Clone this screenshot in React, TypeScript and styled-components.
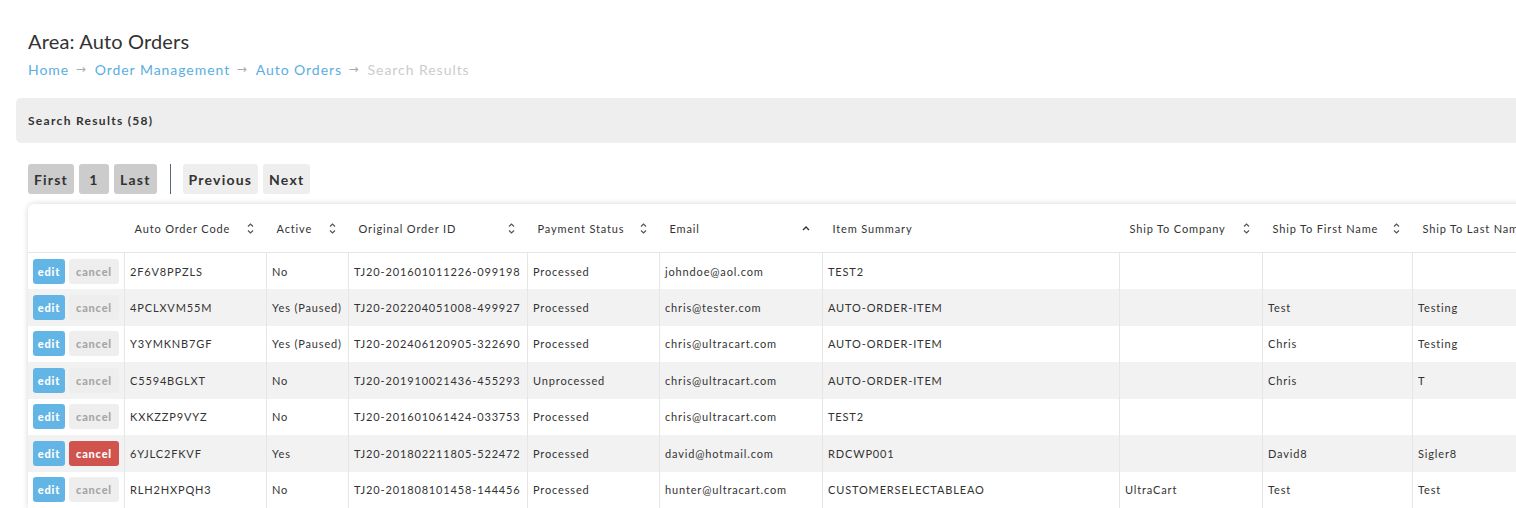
import React from "react";
import styled, { createGlobalStyle } from "styled-components";

const GlobalStyle = createGlobalStyle`
  html, body { margin: 0; padding: 0; background: #ffffff; overflow: hidden; }
  body { font-family: Lato, "Open Sans", Arial, sans-serif; color: #333333; }
`;

const Page = styled.div`
  width: 1760px;
  padding: 0 0 0 16px;
  box-sizing: border-box;
`;

const Header = styled.div`
  padding: 29px 0 0 12px;
`;

const Title = styled.h1`
  margin: 0;
  font-size: 20px;
  line-height: 24px;
  font-weight: 400;
  letter-spacing: 0.15px;
  color: #333333;
`;

const Crumbs = styled.nav`
  display: flex;
  align-items: center;
  margin-top: 6px;
  height: 20px;
  font-size: 14px;
  letter-spacing: 0.95px;
`;

const Crumb = styled.span<{ $current?: boolean }>`
  color: ${(p) => (p.$current ? "#cccccc" : "#5aaee2")};
`;

const Arrow = styled.span`
  color: #aaaaaa;
  font-size: 12px;
  letter-spacing: 0;
  margin: 0 9px 0 6.5px;
  font-family: "DejaVu Sans", sans-serif;
`;

const Panel = styled.div`
  margin-top: 19px;
  height: 45px;
  background: #eeeeee;
  border-radius: 5px;
  display: flex;
  align-items: center;
  padding: 0 12px;
  font-size: 12px;
  font-weight: 700;
  letter-spacing: 1.3px;
  color: #333333;
`;

const Pager = styled.div`
  display: flex;
  align-items: center;
  margin: 21px 0 0 12px;
  height: 30px;
  gap: 5px;
`;

const PageButton = styled.button<{ $dark?: boolean }>`
  height: 30px;
  min-width: 30px;
  padding: 0 6px;
  border: none;
  border-radius: 3px;
  background: ${(p) => (p.$dark ? "#cccccc" : "#eeeeee")};
  color: #333333;
  font-family: Lato, sans-serif;
  font-size: 14px;
  font-weight: 700;
  letter-spacing: 1.2px;
  cursor: pointer;
`;

const Divider = styled.span`
  width: 1px;
  height: 30px;
  background: #5b6877;
  margin: 0 7px 0 8px;
`;

const Card = styled.div`
  margin: 10px 0 0 12px;
  background: #ffffff;
  border-radius: 6px 0 0 0;
  box-shadow: 0 0 6px rgba(0, 0, 0, 0.16);
  overflow: hidden;
`;

const Table = styled.table`
  border-collapse: collapse;
  table-layout: fixed;
  font-size: 11px;
  letter-spacing: 0.85px;
  color: #333333;
`;

const HeadCell = styled.th`
  height: 48px;
  padding: 0 13px 0 10px;
  font-weight: 400;
  text-align: left;
  border-bottom: 1px solid #e6e6e6;
  white-space: nowrap;
  overflow: hidden;
`;

const HeadInner = styled.div`
  display: flex;
  align-items: center;
  justify-content: space-between;
`;

const Row = styled.tr<{ $alt?: boolean }>`
  height: 36.5px;
  background: ${(p) => (p.$alt ? "#f2f2f2" : "#ffffff")};
`;

const Cell = styled.td`
  padding: 0 5px;
  border-left: 1px solid #e6e6e6;
  white-space: nowrap;
  overflow: hidden;
  &:first-child { border-left: none; }
`;

const Actions = styled.div`
  display: flex;
  gap: 4px;
`;

const ActionButton = styled.button<{ $kind: "edit" | "cancel" | "danger" }>`
  height: 25px;
  padding: 0;
  width: ${(p) => (p.$kind === "edit" ? "32px" : "50px")};
  border: none;
  border-radius: 3px;
  font-family: Lato, sans-serif;
  font-size: 11px;
  font-weight: 900;
  letter-spacing: 0.8px;
  background: ${(p) =>
    p.$kind === "edit" ? "#62b5e5" : p.$kind === "danger" ? "#d0534e" : "#eeeeee"};
  color: ${(p) => (p.$kind === "cancel" ? "#a6a6a6" : "#ffffff")};
`;

const SortBoth = () => (
  <svg width="7" height="11" viewBox="0 0 7 11" fill="none" stroke="#555" strokeWidth="1.2">
    <path d="M1 3.5 L3.5 1 L6 3.5" />
    <path d="M1 7.5 L3.5 10 L6 7.5" />
  </svg>
);

const SortUp = () => (
  <svg width="8" height="11" viewBox="0 0 8 11" fill="none" stroke="#333" strokeWidth="1.4">
    <path d="M1 7 L4 4 L7 7" />
  </svg>
);

type Col = { label: string; width: number; sort?: "both" | "up" };

const columns: Col[] = [
  { label: "", width: 96 },
  { label: "Auto Order Code", width: 142, sort: "both" },
  { label: "Active", width: 82, sort: "both" },
  { label: "Original Order ID", width: 179, sort: "both" },
  { label: "Payment Status", width: 132, sort: "both" },
  { label: "Email", width: 163, sort: "up" },
  { label: "Item Summary", width: 297 },
  { label: "Ship To Company", width: 143, sort: "both" },
  { label: "Ship To First Name", width: 150, sort: "both" },
  { label: "Ship To Last Name", width: 150, sort: "both" },
];

type Order = {
  code: string;
  active: string;
  orig: string;
  payment: string;
  email: string;
  item: string;
  company: string;
  first: string;
  last: string;
  cancellable?: boolean;
};

const orders: Order[] = [
  { code: "2F6V8PPZLS", active: "No", orig: "TJ20-201601011226-099198", payment: "Processed", email: "johndoe@aol.com", item: "TEST2", company: "", first: "", last: "" },
  { code: "4PCLXVM55M", active: "Yes (Paused)", orig: "TJ20-202204051008-499927", payment: "Processed", email: "chris@tester.com", item: "AUTO-ORDER-ITEM", company: "", first: "Test", last: "Testing" },
  { code: "Y3YMKNB7GF", active: "Yes (Paused)", orig: "TJ20-202406120905-322690", payment: "Processed", email: "chris@ultracart.com", item: "AUTO-ORDER-ITEM", company: "", first: "Chris", last: "Testing" },
  { code: "C5594BGLXT", active: "No", orig: "TJ20-201910021436-455293", payment: "Unprocessed", email: "chris@ultracart.com", item: "AUTO-ORDER-ITEM", company: "", first: "Chris", last: "T" },
  { code: "KXKZZP9VYZ", active: "No", orig: "TJ20-201601061424-033753", payment: "Processed", email: "chris@ultracart.com", item: "TEST2", company: "", first: "", last: "" },
  { code: "6YJLC2FKVF", active: "Yes", orig: "TJ20-201802211805-522472", payment: "Processed", email: "david@hotmail.com", item: "RDCWP001", company: "", first: "David8", last: "Sigler8", cancellable: true },
  { code: "RLH2HXPQH3", active: "No", orig: "TJ20-201808101458-144456", payment: "Processed", email: "hunter@ultracart.com", item: "CUSTOMERSELECTABLEAO", company: "UltraCart", first: "Test", last: "Test" },
];

export default function App() {
  return (
    <>
      <GlobalStyle />
      <Page>
        <Header>
          <Title>Area: Auto Orders</Title>
          <Crumbs>
            <Crumb>Home</Crumb>
            <Arrow>→</Arrow>
            <Crumb>Order Management</Crumb>
            <Arrow>→</Arrow>
            <Crumb>Auto Orders</Crumb>
            <Arrow>→</Arrow>
            <Crumb $current>Search Results</Crumb>
          </Crumbs>
        </Header>
        <Panel>Search Results (58)</Panel>
        <Pager>
          <PageButton $dark>First</PageButton>
          <PageButton $dark>1</PageButton>
          <PageButton $dark>Last</PageButton>
          <Divider />
          <PageButton>Previous</PageButton>
          <PageButton>Next</PageButton>
        </Pager>
        <Card>
          <Table>
            <colgroup>
              {columns.map((c, i) => (
                <col key={i} style={{ width: c.width }} />
              ))}
            </colgroup>
            <thead>
              <tr>
                {columns.map((c, i) => (
                  <HeadCell key={i}>
                    <HeadInner>
                      <span>{c.label}</span>
                      {c.sort === "both" && <SortBoth />}
                      {c.sort === "up" && <SortUp />}
                    </HeadInner>
                  </HeadCell>
                ))}
              </tr>
            </thead>
            <tbody>
              {orders.map((o, i) => (
                <Row key={o.code} $alt={i % 2 === 1}>
                  <Cell>
                    <Actions>
                      <ActionButton $kind="edit">edit</ActionButton>
                      <ActionButton $kind={o.cancellable ? "danger" : "cancel"}>cancel</ActionButton>
                    </Actions>
                  </Cell>
                  <Cell>{o.code}</Cell>
                  <Cell>{o.active}</Cell>
                  <Cell>{o.orig}</Cell>
                  <Cell>{o.payment}</Cell>
                  <Cell>{o.email}</Cell>
                  <Cell>{o.item}</Cell>
                  <Cell>{o.company}</Cell>
                  <Cell>{o.first}</Cell>
                  <Cell>{o.last}</Cell>
                </Row>
              ))}
            </tbody>
          </Table>
        </Card>
      </Page>
    </>
  );
}
